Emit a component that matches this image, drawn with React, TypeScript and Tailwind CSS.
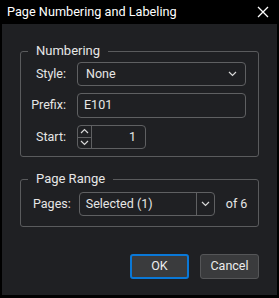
import React from "react";

const font = { fontFamily: "Roboto, 'Noto Sans', sans-serif" };

function Chevron({ up = false, className = "" }: { up?: boolean; className?: string }) {
  return (
    <svg width="9" height="6" viewBox="0 0 9 6" className={className}>
      <path
        d={up ? "M1 5 L4.5 1.5 L8 5" : "M1 1 L4.5 4.5 L8 1"}
        fill="none"
        stroke="#d8d8d8"
        strokeWidth="1.2"
      />
    </svg>
  );
}

export default function App() {
  return (
    <div
      className="w-[279px] h-[298px] bg-black flex flex-col px-[2px] pb-[3px] text-[12.5px] text-[#e6e6e6]"
      style={font}
    >
      <div className="h-[24px] flex items-center justify-between pl-[5px] pr-[8px] shrink-0">
        <span className="text-[12.7px] text-white leading-none">Page Numbering and Labeling</span>
        <svg width="12" height="12" viewBox="0 0 12 12">
          <path d="M1 1 L11 11 M11 1 L1 11" stroke="#ffffff" strokeWidth="1.3" />
        </svg>
      </div>
      <div className="flex-1 bg-[#1f2023] flex flex-col px-[18px] pt-[19px]">
        <fieldset className="border border-[#5a5b5d] rounded-[3px] pb-[7px] pr-[12px]">
          <legend className="ml-[7px] px-[8px] text-[13px] leading-[16px]">Numbering</legend>
          <div className="flex flex-col gap-[7px] pt-[3px]">
            <div className="flex items-center">
              <span className="w-[45px] text-right mr-[11px]">Style:</span>
              <div className="flex-1 h-[24px] border border-[#5f6062] rounded-[4px] flex items-center justify-between pl-[8px] pr-[8px]">
                <span>None</span>
                <Chevron />
              </div>
            </div>
            <div className="flex items-center">
              <span className="w-[45px] text-right mr-[11px]">Prefix:</span>
              <div className="flex-1 h-[25px] border border-[#5f6062] rounded-[4px] flex items-center pl-[6px]">
                <span>E101</span>
              </div>
            </div>
            <div className="flex items-center">
              <span className="w-[45px] text-right mr-[11px]">Start:</span>
              <div className="w-[69px] h-[24px] border border-[#5f6062] rounded-[4px] flex">
                <div className="w-[14px] border-r border-[#5f6062] flex flex-col">
                  <div className="flex-1 flex items-center justify-center border-b border-[#5f6062]">
                    <Chevron up />
                  </div>
                  <div className="flex-1 flex items-center justify-center">
                    <Chevron />
                  </div>
                </div>
                <div className="flex-1 flex items-center justify-end pr-[9px]">1</div>
              </div>
            </div>
          </div>
        </fieldset>
        <fieldset className="mt-[14px] border border-[#5a5b5d] rounded-[3px] pb-[10px]">
          <legend className="ml-[7px] px-[8px] text-[13px] leading-[16px]">Page Range</legend>
          <div className="flex items-center pt-[5px] pl-[12px]">
            <span className="mr-[8px]">Pages:</span>
            <div className="w-[136px] h-[24px] border border-[#5f6062] rounded-[4px] flex">
              <div className="flex-1 flex items-center pl-[6px]">Selected (1)</div>
              <div className="w-[18px] border-l border-[#5f6062] flex items-center justify-center">
                <Chevron />
              </div>
            </div>
            <span className="ml-[11px]">of 6</span>
          </div>
        </fieldset>
        <div className="flex justify-end gap-[11px] mt-auto mb-[16px]">
          <button className="w-[59px] h-[25px] rounded-[3px] border-2 border-[#0a78d7] bg-[#3a3b3d] text-[#ececec]">
            OK
          </button>
          <button className="w-[59px] h-[25px] rounded-[3px] border border-[#555658] bg-[#3a3b3d] text-[#ececec]">
            Cancel
          </button>
        </div>
      </div>
    </div>
  );
}
